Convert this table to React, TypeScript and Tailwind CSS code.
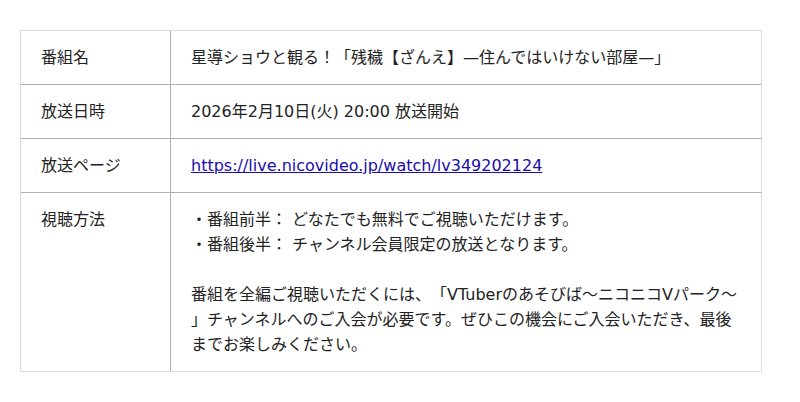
import React from "react";

const rows: { label: string; content: React.ReactNode }[] = [
  { label: "番組名", content: "星導ショウと観る！「残穢【ざんえ】—住んではいけない部屋—」" },
  { label: "放送日時", content: "2026年2月10日(火) 20:00 放送開始" },
  {
    label: "放送ページ",
    content: (
      <a href="#" className="text-[#1a0dab] underline">
        https://live.nicovideo.jp/watch/lv349202124
      </a>
    ),
  },
  {
    label: "視聴方法",
    content: (
      <div className="whitespace-nowrap">
        <div>・番組前半： どなたでも無料でご視聴いただけます。</div>
        <div>・番組後半： チャンネル会員限定の放送となります。</div>
        <div className="h-[25px]" />
        <div>番組を全編ご視聴いただくには、「VTuberのあそびば〜ニコニコVパーク〜</div>
        <div>」チャンネルへのご入会が必要です。ぜひこの機会にご入会いただき、最後</div>
        <div>までお楽しみください。</div>
      </div>
    ),
  },
];

export default function App() {
  return (
    <div
      className="w-[800px] h-[402px] bg-white pt-[30px] pl-[20px] text-[16px] leading-[25px] text-[#222] [text-spacing-trim:space-all]"
      style={{ fontFamily: '"DejaVu Sans", "Noto Sans CJK JP", sans-serif' }}
    >
      <div className="w-[742px] border border-[#dcdcdc] flex flex-col">
        {rows.map((r, i) => (
          <div key={i} className={`flex ${i > 0 ? "border-t border-[#b0b0b0]" : ""}`}>
            <div className="w-[150px] shrink-0 border-r border-[#b0b0b0] px-[20px] py-[14px]">{r.label}</div>
            <div className="flex-1 px-[20px] py-[14px]">{r.content}</div>
          </div>
        ))}
      </div>
    </div>
  );
}
